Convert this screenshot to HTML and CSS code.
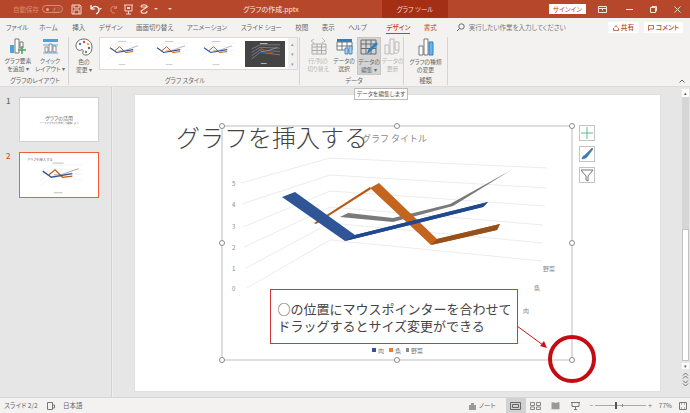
FILE: index.html
```html
<!DOCTYPE html>
<html lang="ja">
<head>
<meta charset="utf-8">
<title>グラフの作成.pptx</title>
<link rel="stylesheet" href="styles.css">
</head>
<body>
<svg class="defs" width="0" height="0">
  <symbol id="mini" viewBox="0 0 48 30">
    <g fill="none" stroke="#e8e8e8" stroke-width=".4">
      <path d="M8 21 18 13 42 16M8 17 18 10 42 12M8 13 18 7 42 8M8 9 18 4 42 4"/>
    </g>
    <path d="M19 12 25 12 39 7" fill="none" stroke="#a8a8a8" stroke-width=".8"/>
    <path d="M15 12 20 8 26 14 34 13" fill="none" stroke="#c55a11" stroke-width="1"/>
    <path d="M10 9 17 14 34 11" fill="none" stroke="#2f5597" stroke-width="1.100"/>
    <g fill="#ccc"><rect x="18" y="2" width="9" height="1"/><rect x="19" y="26" width="7" height="1"/></g>
  </symbol>
</svg>

<header class="titlebar">
  <div class="qat">
    <span class="autosave">自動保存</span>
    <span class="toggle"><i class="dot"></i>オフ</span>
    <svg class="qi" width="11" height="11" viewBox="0 0 11 11"><path d="M1 1h8l1 1v8H1Z M3 1v3h5V1 M3 10V6h5v4" fill="none" stroke="#f4d5cc"/></svg>
    <svg class="qi" width="14" height="11" viewBox="0 0 14 11"><path d="M2 1v4h4M2 5c3-4 8-3 8 1 0 2-1 3-3 4" fill="none" stroke="#fff" stroke-width="1.2"/><path d="M11 5h3l-1.500 2Z" fill="#f4d5cc" transform="translate(-1 -1)"/></svg>
    <svg class="qi" width="8" height="11" viewBox="0 0 10 11"><path d="M8 1v3H5M8 4C5 0 1 2 1 6c0 3 3 4 5 4" fill="none" stroke="#e8a08c"/></svg>
    <svg class="qi tight" width="11" height="11" viewBox="0 0 11 11"><path d="M1 1h9M2 1v6h7V1M5.500 7v3M3 10h5" fill="none" stroke="#f4d5cc"/><path d="M4 3h3v2H4Z" fill="#f4d5cc"/></svg>
    <svg class="qi tight" width="11" height="11" viewBox="0 0 11 11"><path d="M2 3c0-3 6-3 6 0M2 3h6L2 7c0 3 6 3 6 0" fill="none" stroke="#f4d5cc" stroke-width="1.200"/></svg>
    <span class="caret"></span>
    <span class="caret qlast"></span>
  </div>
  <div class="fname">グラフの作成.pptx</div>
  <div class="ctx">グラフ ツール</div>
  <button class="signin">サインイン</button>
  <div class="winctl">
    <svg width="9" height="7" viewBox="0 0 9 7"><path d="M.5.500h8v6h-8ZM.5 2.500h8M4.500 2.500v2" fill="none" stroke="#f9e3dc"/></svg>
    <svg width="7" height="7" viewBox="0 0 7 7"><path d="M0 3.500h7" stroke="#f9e3dc"/></svg>
    <svg width="7" height="7" viewBox="0 0 7 7"><path d="M.5 1.500h5v5h-5ZM2 1.500V.5h4.500V5H5.500" fill="none" stroke="#f9e3dc"/></svg>
    <svg width="7" height="7" viewBox="0 0 7 7"><path d="M.5.500l6 6M6.500.500l-6 6" stroke="#f9e3dc"/></svg>
  </div>
</header>

<nav class="tabs">
  <span>ファイル</span><span class="t-home">ホーム</span><span>挿入</span><span>デザイン</span><span>画面切り替え</span><span>アニメーション</span><span>スライド ショー</span><span>校閲</span><span>表示</span><span>ヘルプ</span>
  <span class="active">デザイン</span><span class="accent">書式</span>
  <svg class="search" width="9" height="9" viewBox="0 0 9 9"><circle cx="5.500" cy="3.500" r="2.700" fill="none" stroke="#666"/><path d="M3.500 5.500 1 8" stroke="#666"/></svg>
  <span class="tell">実行したい作業を入力してください</span>
  <button class="tb-btn share"><svg class="bi" width="6" height="6" viewBox="0 0 6 6"><path d="M.5 3v2.500h5V3M1.500 2.500 3 .5l1.500 2" fill="none" stroke="#b7472a" stroke-width=".8"/></svg>共有</button>
  <button class="tb-btn comment"><svg class="bi" width="6" height="6" viewBox="0 0 6 6"><path d="M.5.500h5v3.500H2L.5 5.500Z" fill="none" stroke="#b7472a" stroke-width=".8"/></svg>コメント</button>
</nav>

<section class="ribbon">
  <div class="group g-layout">
    <div class="items">
      <div class="rb w32"><svg width="18" height="17" viewBox="0 0 18 17"><path d="M1 7h4v8H1Z" fill="#4aa3df"/><path d="M6 1h4v14H6ZM11 4h3v6h-3Z" fill="#fff" stroke="#777"/><path d="M13 8v8M9 12h8" stroke="#3fa866" stroke-width="1.500"/></svg><span>グラフ要素<br>を追加 ▾</span></div>
      <div class="rb w32"><svg width="17" height="17" viewBox="0 0 17 17"><path d="M1 1h15v3H1Z" fill="#4aa3df"/><path d="M1 6h15v2H1ZM1 14h15v2H1Z" fill="#a9cfe9"/><path d="M3 9h3v5H3ZM7 6h3v8H7ZM11 8h3v6h-3Z" fill="#fff" stroke="#777" stroke-width=".8"/></svg><span>クイック<br>レイアウト ▾</span></div>
    </div>
    <div class="glabel">グラフのレイアウト</div>
  </div>
  <div class="group g-style">
    <div class="items">
      <div class="rb w26"><svg width="18" height="18" viewBox="0 0 18 18"><path d="M9 1C4 1 1 4 1 8c0 4 4 5 5 4s3 0 2 2 1 3 3 3c4 0 6-4 6-8 0-5-4-8-8-8Z" fill="#fff" stroke="#666"/><circle cx="5" cy="6" r="1.200" fill="#3a7fc4"/><circle cx="9" cy="4" r="1.200" fill="#e8453c"/><circle cx="13" cy="6" r="1.200" fill="#f2b233"/><circle cx="14" cy="10" r="1.200" fill="#8e44ad"/><circle cx="11" cy="14" r="1.200" fill="#4aa34a"/></svg><span>色の<br>変更 ▾</span></div>
      <div class="gallery">
        <svg class="gthumb" viewBox="0 0 48 30"><use href="#mini"/></svg>
        <svg class="gthumb" viewBox="0 0 48 30"><use href="#mini"/></svg>
        <svg class="gthumb" viewBox="0 0 48 30"><use href="#mini"/></svg>
        <svg class="gthumb dark" viewBox="0 0 48 30"><use href="#mini"/></svg>
        <div class="gscroll"><i>▴</i><i>▾</i><i>▾</i></div>
      </div>
    </div>
    <div class="glabel">グラフ スタイル</div>
  </div>
  <div class="group g-data">
    <div class="items">
      <div class="rb w26 off"><svg width="17" height="17" viewBox="0 0 17 17"><path d="M2 6h14v10H2ZM2 9h14M2 12.500h14M7 6v10M11.500 6v10" fill="#eee" stroke="#aaa"/><path d="M4 1 1 3l3 2M12 0l3 3-3 2" fill="none" stroke="#bbb"/></svg><span>行/列の<br>切り替え</span></div>
      <div class="rb w26"><svg width="17" height="17" viewBox="0 0 17 17"><path d="M1 1h15v3H1Z" fill="#2d7fc4"/><path d="M1 4h15v8H1ZM1 8h15M6 4v8M11 4v8" fill="#fff" stroke="#777"/><path d="M9 10h3v6H9ZM13 8h3v8h-3Z" fill="#aad0ee" stroke="#2d7fc4" stroke-width=".8"/></svg><span>データの<br>選択</span></div>
      <div class="rb w24 on"><svg width="18" height="17" viewBox="0 0 18 17"><path d="M1 1h15v14H1ZM1 5h15M1 9.500h15M6 1v14M11 1v14" fill="none" stroke="#6a6a6a"/><path d="M7 15l1-4 8-8 2 2-8 8Z" fill="#2d7fc4"/></svg><span>データの<br>編集 ▾</span></div>
      <div class="rb w20 off"><svg width="17" height="17" viewBox="0 0 17 17"><path d="M1 7h4v9H1ZM6 1h4v15H6ZM11 4h4v8h-4Z" fill="none" stroke="#bbb"/><path d="M10 15c2 1 5 0 5-3" fill="none" stroke="#bbb"/></svg><span>データの<br>更新</span></div>
    </div>
    <div class="glabel">データ</div>
  </div>
  <div class="group g-type">
    <div class="items">
      <div class="rb w44"><svg width="16" height="18" viewBox="0 0 16 18"><path d="M1 8h4v9H1ZM6 1h4v16H6Z" fill="#fff" stroke="#777"/><path d="M11 4h4v13h-4Z" fill="#6ab3ea" stroke="#2d7fc4"/></svg><span>グラフの種類<br>の変更</span></div>
    </div>
    <div class="glabel">種類</div>
  </div>
  <svg class="collapse" width="6" height="4" viewBox="0 0 6 4"><path d="M.5 3.500 3 1l2.500 2.500" fill="none" stroke="#666"/></svg>
</section>

<main class="workspace">
  <aside class="thumbs">
    <div class="trow"><span class="num">1</span><div class="thumb t1"><b>グラフの活用</b><small>ツールでグラフを作成して編集しよう</small></div></div>
    <div class="trow"><span class="num sel">2</span><div class="thumb t2"><b>グラフを挿入する</b><svg class="tchart" viewBox="0 0 48 30"><use href="#mini"/></svg></div></div>
  </aside>
  <div class="split"></div>
  <div class="editor">
    <div class="slide">
      <h1 class="stitle">グラフを挿入する</h1>
      <svg class="canvas" viewBox="135 95 525 296" width="525" height="296">
        <g fill="none" stroke="#ececec" stroke-width="1">
          <path d="M247 288 330 240 542 261"/><path d="M246 268 330 223 543 243"/><path d="M244 247 330 207 543 225"/><path d="M243 227 330 191 545 206"/><path d="M242 204 330 175 546 188"/><path d="M241 183 330 158 547 168"/>
        </g>
        <path d="M340 217 348 213 393 218 450 204 513 169 453 206 393 222Z" fill="#7a7a7a"/>
        <path d="M314 223 370 187 371 189 316 224Z" fill="#b9560f"/>
        <path d="M370 188 379 183 437 239 500 224 497 230 431 245Z" fill="#c3651f"/>
        <path d="M431 245 437 239 500 224 497 230Z" fill="#96501c"/>
        <path d="M282 197 295 192 355 235 488 202 483 207 345 241Z" fill="#2f5597"/>
        <path d="M345 241 355 235 488 202 483 207Z" fill="#20488f"/>
        <g class="axis">
          <text x="232" y="186">5</text><text x="232" y="207">4</text><text x="232" y="229">3</text><text x="232" y="250">2</text><text x="232" y="271">1</text><text x="232" y="291">0</text>
          <text x="543" y="271">野菜</text><text x="534" y="290">魚</text><text x="523" y="313">肉</text>
        </g>
        <text class="ctitle" x="362" y="142">グラフ タイトル</text>
        <rect x="372" y="348" width="4" height="4" fill="#2f5597"/><text class="legend" x="378" y="353">肉</text>
        <rect x="389" y="348" width="4" height="4" fill="#ed7d31"/><text class="legend" x="395" y="353">魚</text>
        <rect x="406" y="348" width="3" height="4" fill="#8a8a8a"/><text class="legend" x="411" y="353">野菜</text>
        <rect x="222" y="126" width="350" height="234" fill="none" stroke="#bdbdbd" stroke-width="1"/>
        <g fill="#fff" stroke="#8a8a8a">
          <circle cx="222" cy="126" r="2.500"/><circle cx="397" cy="126" r="2.500"/><circle cx="572" cy="126" r="2.500"/><circle cx="222" cy="243" r="2.500"/><circle cx="572" cy="243" r="2.500"/><circle cx="222" cy="360" r="2.500"/><circle cx="397" cy="360" r="2.500"/><circle cx="572" cy="360" r="2.500"/>
        </g>
        <g fill="#fff" stroke="#c4c4c4">
          <rect x="579.500" y="125.500" width="15" height="15"/><rect x="579.500" y="146.500" width="15" height="15"/><rect x="579.500" y="167.500" width="15" height="15"/>
        </g>
        <path d="M587 127v12M581 133h12" stroke="#5fbf8a" stroke-width="1"/>
        <path d="M582 159c0-3 2-3 3-4l7-7 1 1-6 8c-1 1-3 2-5 2Z" fill="#2d7fc4" stroke="#666" stroke-width=".5"/>
        <path d="M581 170h12l-5 6v5l-2-1v-4Z" fill="none" stroke="#777"/>
        <path d="M517 326 543 345" stroke="#c8141c" stroke-width="1"/>
        <path d="M547 348 540 346 544 341Z" fill="#c8141c"/>
        <circle cx="572" cy="359" r="22" fill="none" stroke="#c40d12" stroke-width="4"/>
      </svg>
      <div class="callout">○の位置にマウスポインターを合わせて<br>ドラッグするとサイズ変更ができる</div>
    </div>
    <div class="tooltip">データを編集します</div>
    <div class="vscroll">
      <i class="sbtn">▴</i>
      <div class="strack"></div>
      <div class="sthumb"></div>
      <i class="sbtn down">▾</i>
      <svg class="pbtn" width="7" height="15" viewBox="0 0 7 15"><path d="M1 3.500 3.500 1 6 3.500M1 6.500 3.500 4 6 6.500M1 8.500 3.500 11 6 8.500M1 11.500 3.500 14 6 11.500" fill="none" stroke="#666" stroke-width=".9"/></svg>
    </div>
  </div>
</main>

<footer class="status">
  <span class="s-slide">スライド 2/2</span>
  <svg width="8" height="8" viewBox="0 0 8 8"><path d="M.5.500h5v7h-5ZM5.500 3h2v3h-2" fill="none" stroke="#777"/></svg>
  <span class="s-lang">日本語</span>
  <span class="push"></span>
  <svg width="7" height="8" viewBox="0 0 7 8"><path d="M2 3V1h3v2M0 3h7v5H0Z" fill="#999"/></svg>
  <span class="s-note">ノート</span>
  <span class="view cur"><svg width="11" height="8" viewBox="0 0 11 8"><path d="M.5.500h10v7H.5ZM2.500 2.500h6v3h-6Z" fill="none" stroke="#666"/></svg></span>
  <span class="view"><svg width="11" height="8" viewBox="0 0 11 8"><path d="M.5.500h4v3h-4ZM6.500.500h4v3h-4ZM.5 5h4v2.500h-4ZM6.500 5h4v2.500h-4Z" fill="none" stroke="#888"/></svg></span>
  <span class="view"><svg width="9" height="8" viewBox="0 0 9 8"><path d="M4.500 1C3 0 1 0 .5.500v7c1-.5 3-.5 4 0 1-.5 3-.5 4 0v-7C8 0 6 0 4.500 1Z" fill="#999"/></svg></span>
  <span class="view"><svg width="9" height="8" viewBox="0 0 9 8"><path d="M0 .5h9M1 .5v4h7v-4M4.500 4.500V7M3 7.500h3" fill="none" stroke="#777"/></svg></span>
  <div class="zoomer"><span>−</span><div class="track"><i class="knob"></i><i class="tick"></i></div><span>+</span></div>
  <span class="pct">77%</span>
  <svg class="fit" width="8" height="8" viewBox="0 0 8 8"><path d="M.5.500h7v7h-7ZM2 2h1M5 2h1M2 6h1M5 6h1" fill="none" stroke="#777"/></svg>
</footer>
</body>
</html>
```

FILE: styles.css
```css
* { box-sizing: border-box; }
html, body { margin: 0; padding: 0; }
body {
  width: 690px; height: 413px; overflow: hidden;
  display: flex; flex-direction: column;
  background: #e6e6e6; color: #555;
  font-family: "Noto Sans CJK JP", "Noto Sans", sans-serif;
  font-size: 6.5px; line-height: 1;
  font-feature-settings: "palt";
}
.defs { position: absolute; }
button { font: inherit; font-feature-settings: inherit; border: 0; padding: 0; }

.titlebar { height: 18px; flex: none; display: flex; align-items: center; background: #b7472a; color: #fff; }
.qat { width: 223px; display: flex; align-items: center; padding-left: 13px; gap: 7px; }
.autosave { color: #d98a75; width: 24px; white-space: nowrap; }
.toggle { width: 21px; height: 8px; border: 1px solid #d98a75; border-radius: 4px; display: flex; align-items: center; gap: 3px; padding-left: 3px; color: #d98a75; font-size: 4.500px; margin-left: -2px; margin-right: 1px; }
.dot { width: 3px; height: 3px; background: #e8a08c; border-radius: 50%; }
.tight { margin-left: -2px; }
.caret { width: 0; height: 0; border: 2px solid transparent; border-top-color: #f4d5cc; border-bottom: 0; margin-left: -3px; }
.qlast { margin-left: 3px; }
.fname { width: 96px; text-align: center; color: #f9e9e4; font-size: 7px; }
.ctx { width: 66px; height: 18px; margin-left: 63px; background: #a42f14; color: #f4d5cc; display: flex; align-items: center; justify-content: center; }
.signin { width: 37px; height: 10px; margin-left: 101px; background: #fff; color: #b7472a; }
.winctl { display: flex; align-items: center; gap: 17px; margin-left: 12px; }
.winctl svg:first-child { margin-right: 2px; }

.tabs { height: 19px; flex: none; display: flex; align-items: center; gap: 13.500px; padding: 0 7px 0 6px; background: #f3f2f1; font-size: 6.500px; color: #666; }
.tabs span { white-space: nowrap; }
.t-home { margin-left: -3px; margin-right: 1px; }
.active { color: #b7472a; font-weight: 500; position: relative; margin-left: 6px; }
.active::after { content: ""; position: absolute; left: 0; right: 0; bottom: -3px; height: 1px; background: #b7472a; }
.accent { color: #b7472a; }
.search { margin-left: 6px; margin-right: -10px; }
.tell { color: #777; }
.tb-btn { height: 11px; background: #fff; color: #b7472a; font-weight: 500; font-size: 6.700px; flex: none; display: flex; align-items: center; justify-content: center; gap: 2px; }
.bi { flex: none; }
.share { width: 31px; margin-left: auto; }
.comment { width: 39px; margin-left: -8.500px; }

.ribbon { height: 50px; flex: none; display: flex; background: #f3f2f1; position: relative; border-bottom: 1px solid #dcdcdc; }
.group { display: flex; flex-direction: column; border-right: 1px solid #d4d4d4; margin-bottom: 1px; flex: none; }
.g-layout { width: 69px; padding-left: 2px; }
.g-style { width: 231px; padding-left: 2px; }
.g-data { width: 104px; padding-left: 5px; }
.g-type { width: 44px; }
.items { flex: 1; display: flex; min-height: 0; }
.glabel { height: 8px; text-align: center; font-size: 6.300px; line-height: 8px; color: #666; }
.rb { display: flex; flex-direction: column; align-items: center; gap: 2px; text-align: center; font-size: 5.800px; line-height: 8px; color: #666; flex: none; padding-top: 1px; white-space: nowrap; }
.rb svg { flex: none; }
.w20 { width: 23px; } .w24 { width: 24px; } .w26 { width: 26px; } .w32 { width: 32px; } .w44 { width: 43px; }
.off { color: #b5b5b5; }
.on { background: #d4d4d4; height: 38px; border: 1px solid #c6c6c6; }
.gallery { width: 199px; height: 33px; margin-left: 2px; background: #fff; border: 1px solid #dadada; display: flex; align-items: center; }
.gthumb { width: 47px; height: 29px; flex: none; }
.gthumb.dark { width: 40px; height: 26px; margin-left: 4px; background: #444; }
.gscroll { width: 9px; margin-left: 3px; height: 100%; display: flex; flex-direction: column; background: #f0f0f0; }
.gscroll i { flex: 1; font-style: normal; font-size: 5px; display: flex; align-items: center; justify-content: center; color: #999; }
.collapse { position: absolute; right: 5px; bottom: 3px; }

.workspace { flex: 1; min-height: 0; display: flex; }
.thumbs { width: 111px; flex: none; padding: 10px 0 0 6px; display: flex; flex-direction: column; gap: 10px; }
.trow { display: flex; gap: 7px; }
.num { width: 6px; font-size: 8px; font-weight: 500; color: #666; }
.num.sel { color: #d9542c; }
.thumb { width: 80px; height: 45px; background: #fff; border: 1px solid #d0d0d0; position: relative; overflow: hidden; flex: none; }
.t1 { display: flex; flex-direction: column; align-items: center; justify-content: center; gap: 2px; }
.t1 b { font-size: 5px; font-weight: 400; color: #666; }
.t1 small { font-size: 2.500px; color: #777; }
.t2 { border: 1.500px solid #e8623a; height: 46px; padding: 5px 0 0 7px; }
.t2 b { display: block; font-size: 3.500px; font-weight: 400; color: #777; }
.tchart { position: absolute; left: 9px; top: 7px; width: 62px; height: 37px; }
.split { width: 2px; flex: none; background: #f0f0f0; border-left: 1px solid #d2d2d2; }
.editor { flex: 1; min-width: 0; position: relative; padding: 8px 0 0 22px; }
.slide { width: 525px; height: 296px; background: #fff; position: relative; box-shadow: 0 0 1px #bbb; }
.stitle { position: absolute; left: 41px; top: 26px; margin: 0; font-size: 24px; line-height: 32px; font-weight: 300; color: #444; font-feature-settings: normal; white-space: nowrap; }
.canvas { position: absolute; left: 0; top: 0; font-feature-settings: normal; }
.axis text { font-size: 6px; fill: #888; }
.ctitle { font-size: 9px; fill: #8a8a8a; }
.legend { font-size: 6px; fill: #777; }
.callout { position: absolute; left: 135px; top: 194px; width: 248px; height: 55px; border: 1.500px solid #d4353a; background: #fff; padding: 10px 0 0 6.500px; font-size: 13px; line-height: 17px; color: #444; font-feature-settings: normal; white-space: nowrap; }
.tooltip { position: absolute; left: 241px; top: 1px; width: 54px; height: 12px; background: #fff; border: 1px solid #bbb; font-size: 5.800px; line-height: 10px; text-align: center; color: #555; white-space: nowrap; }
.vscroll { position: absolute; right: 1px; top: 2px; bottom: 10px; width: 7px; display: flex; flex-direction: column; }
.sbtn { height: 8px; flex: none; font-style: normal; font-size: 5px; line-height: 8px; text-align: center; color: #555; background: #fff; }
.down { height: 6px; line-height: 6px; margin-top: 2px; }
.pbtn { flex: none; margin-top: 3px; }
.strack { flex: 1; background: #d6d6d6; }
.sthumb { height: 132px; flex: none; background: #fff; border: 1px solid #c2c2c2; }

.status { height: 16px; flex: none; display: flex; align-items: center; gap: 6px; padding-left: 4px; background: #f3f2f1; border-top: 1px solid #d6d6d6; color: #666; font-size: 6.500px; }
.s-slide { width: 37px; white-space: nowrap; }
.s-lang { margin-left: 2px; }
.push { flex: 1; }
.s-note { margin-left: -3px; margin-right: 4px; }
.view { width: 20px; height: 15px; display: flex; align-items: center; justify-content: center; }
.view + .view { margin-left: -6px; }
.view:has(+ .zoomer) { margin-right: -2px; }
.cur { background: #d2d2d2; }
.zoomer { display: flex; align-items: center; gap: 2px; }
.track { width: 51px; height: 1px; background: #aaa; position: relative; }
.knob { position: absolute; left: 20px; top: -3px; width: 2px; height: 7px; background: #555; }
.tick { position: absolute; left: 27px; top: -1px; width: 1px; height: 3px; background: #888; }
.pct { margin-left: 1px; }
.fit { margin-right: 3px; margin-left: 1px; }
```
